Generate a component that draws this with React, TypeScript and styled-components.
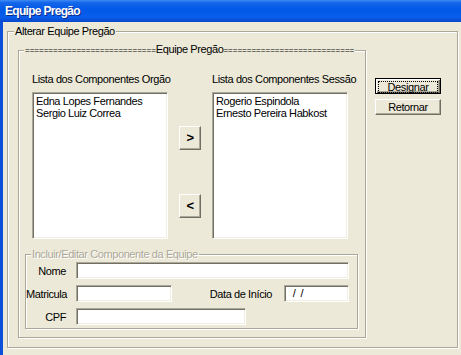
import React from 'react';
import styled, { createGlobalStyle, css } from 'styled-components';

const FONT = '"Liberation Sans", Arial, sans-serif';

const GlobalStyle = createGlobalStyle`
  html, body {
    margin: 0;
    padding: 0;
    background: #ece9d8;
  }
  body {
    font-family: ${FONT};
    font-size: 11px;
    letter-spacing: -0.4px;
    color: #000;
  }
`;

const Window = styled.div`
  width: 461px;
  height: 355px;
  display: flex;
  flex-direction: column;
  background: #ece9d8;
  overflow: hidden;
`;

const TitleBar = styled.div`
  height: 22px;
  flex: none;
  display: flex;
  align-items: center;
  padding-left: 5px;
  background: linear-gradient(
    to bottom,
    #3d8cf4 0%,
    #1466ea 12%,
    #0058e6 45%,
    #0a5eec 78%,
    #0847cb 100%
  );
`;

const Title = styled.span`
  font-weight: bold;
  font-size: 12px;
  letter-spacing: -0.7px;
  color: #fff;
  text-shadow: 1px 1px 0 #0a2a8a;
`;

const Body = styled.div`
  flex: 1;
  border-left: 3px solid #0d4fd8;
  padding: 3px 0 0 4px;
`;

const etched = css`
  border: 1px solid #aca899;
  box-shadow: inset 1px 1px 0 #fff, 1px 1px 0 #fff;
`;

const Group = styled.fieldset<{ $w: number; $h: number }>`
  ${etched};
  box-sizing: border-box;
  width: ${(p) => p.$w}px;
  height: ${(p) => p.$h}px;
  margin: 0;
  padding: 0;
  min-inline-size: 0;
`;

const Legend = styled.legend<{ $offset: number; $disabled?: boolean }>`
  margin-left: ${(p) => p.$offset}px;
  padding: 0 1px;
  line-height: 13px;
  font-size: 11px;
  white-space: nowrap;
  background: #ece9d8;
  color: ${(p) => (p.$disabled ? '#aca899' : '#000')};
  text-shadow: ${(p) => (p.$disabled ? '1px 1px 0 #fff' : 'none')};
`;

const Equals = styled.span`
  font-size: 8px;
  letter-spacing: 0;
`;

const OuterRow = styled.div`
  display: flex;
  padding: 5px 0 0 10px;
`;

const TeamGroup = styled(Group)`
  padding-left: 0;
`;

const ListsRow = styled.div`
  display: flex;
  padding: 16px 0 0 13px;
`;

const ListColumn = styled.div`
  display: flex;
  flex-direction: column;
  width: 136px;
`;

const ListLabel = styled.div`
  height: 13px;
  line-height: 13px;
  margin-bottom: 6px;
  white-space: nowrap;
`;

const sunken = css`
  box-sizing: border-box;
  background: #fff;
  border: 1px solid;
  border-color: #aca899 #fff #fff #aca899;
  box-shadow: inset 1px 1px 0 #716f64, inset -1px -1px 0 #f1efe2;
`;

const ListBox = styled.div`
  ${sunken};
  height: 147px;
  padding: 2px 3px;
`;

const ListItem = styled.div`
  line-height: 12px;
  white-space: nowrap;
`;

const MoveButtons = styled.div`
  display: flex;
  flex-direction: column;
  gap: 44px;
  padding: 53px 11px 0;
`;

const raised = css`
  box-sizing: border-box;
  background: #ece9d8;
  border: 1px solid;
  border-color: #fff #716f64 #716f64 #fff;
  box-shadow: inset -1px -1px 0 #aca899;
  font-family: ${FONT};
  letter-spacing: -0.4px;
  color: #000;
  padding: 0;
  cursor: default;
`;

const MoveButton = styled.button`
  ${raised};
  width: 22px;
  height: 24px;
  font-size: 13px;
  font-weight: bold;
  line-height: 20px;
`;

const EditGroup = styled(Group)`
  margin: 9px 0 0 6px;
`;

const EditFields = styled.div`
  display: flex;
  flex-direction: column;
  gap: 6px;
  padding: 1px 8px 0 0;
`;

const FieldRow = styled.div`
  display: flex;
  align-items: center;
  height: 17px;
`;

const FieldLabel = styled.label<{ $w?: number }>`
  width: ${(p) => (p.$w ? `${p.$w}px` : 'auto')};
  text-align: right;
  white-space: nowrap;
  flex: none;
`;

const DateLabel = styled(FieldLabel)`
  margin-left: auto;
  margin-right: 12px;
`;

const TextBox = styled.div<{ $w?: number }>`
  ${sunken};
  height: 17px;
  width: ${(p) => (p.$w ? `${p.$w}px` : 'auto')};
  flex: ${(p) => (p.$w ? 'none' : '1')};
  margin-left: ${(p) => (p.$w === 65 ? 0 : 10)}px;
  padding: 0 5px;
  line-height: 15px;
  white-space: pre;
`;

const ActionColumn = styled.div`
  display: flex;
  flex-direction: column;
  gap: 5px;
  margin: 35px 0 0 9px;
`;

const ActionButton = styled.button<{ $default?: boolean }>`
  ${raised};
  width: 66px;
  height: 16px;
  font-size: 11px;
  line-height: 12px;
  ${(p) =>
    p.$default &&
    css`
      border: 1px solid #000;
      box-shadow: inset 1px 1px 0 #fff, inset -1px -1px 0 #716f64,
        inset -2px -2px 0 #aca899;
      padding: 2px;
    `}
`;

const FocusRect = styled.span`
  display: block;
  height: 10px;
  line-height: 10px;
  border: 1px dotted #000;
`;

const orgao = ['Edna Lopes Fernandes', 'Sergio Luiz Correa'];
const sessao = ['Rogerio Espindola', 'Ernesto Pereira Habkost'];

const App = () => {
  const bar = '='.repeat(28);
  return (
    <Window>
      <GlobalStyle />
      <TitleBar>
        <Title>Equipe Pregão</Title>
      </TitleBar>
      <Body>
        <Group $w={451} $h={323}>
          <Legend $offset={6}>Alterar Equipe Pregão</Legend>
          <OuterRow>
            <TeamGroup $w={348} $h={295}>
              <Legend $offset={5}>
                <Equals>{bar}</Equals>Equipe Pregão<Equals>{bar}</Equals>
              </Legend>
              <ListsRow>
                <ListColumn>
                  <ListLabel>Lista dos Componentes Orgão</ListLabel>
                  <ListBox>
                    {orgao.map((n) => (
                      <ListItem key={n}>{n}</ListItem>
                    ))}
                  </ListBox>
                </ListColumn>
                <MoveButtons>
                  <MoveButton>&gt;</MoveButton>
                  <MoveButton>&lt;</MoveButton>
                </MoveButtons>
                <ListColumn>
                  <ListLabel>Lista dos Componentes Sessão</ListLabel>
                  <ListBox>
                    {sessao.map((n) => (
                      <ListItem key={n}>{n}</ListItem>
                    ))}
                  </ListBox>
                </ListColumn>
              </ListsRow>
              <EditGroup $w={333} $h={81}>
                <Legend $offset={5} $disabled>
                  Incluir/Editar Componente da Equipe
                </Legend>
                <EditFields>
                  <FieldRow>
                    <FieldLabel $w={40}>Nome</FieldLabel>
                    <TextBox />
                  </FieldRow>
                  <FieldRow>
                    <FieldLabel $w={40}>Matricula</FieldLabel>
                    <TextBox $w={96} />
                    <DateLabel>Data de Início</DateLabel>
                    <TextBox $w={65}>{' /  /'}</TextBox>
                  </FieldRow>
                  <FieldRow>
                    <FieldLabel $w={40}>CPF</FieldLabel>
                    <TextBox $w={170} />
                  </FieldRow>
                </EditFields>
              </EditGroup>
            </TeamGroup>
            <ActionColumn>
              <ActionButton $default>
                <FocusRect>Designar</FocusRect>
              </ActionButton>
              <ActionButton>Retornar</ActionButton>
            </ActionColumn>
          </OuterRow>
        </Group>
      </Body>
    </Window>
  );
};

export default App;
